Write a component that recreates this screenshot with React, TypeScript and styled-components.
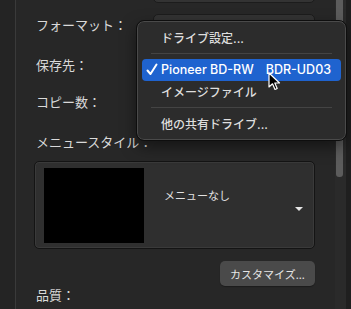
import React from 'react';
import styled, { createGlobalStyle } from 'styled-components';

const GlobalStyle = createGlobalStyle`
  html, body {
    margin: 0;
    padding: 0;
    background: #262626;
  }
  body {
    font-family: "Inter", "Noto Sans CJK JP", sans-serif;
  }
`

const Window = styled.div`
  position: relative;
  width: 351px;
  height: 309px;
  overflow: hidden;
  display: flex;
  background: #272727;
`

const SideStrip = styled.div`
  width: 15px;
  background: #242424;
  border-right: 1px solid #3a3a3a;
`

const Content = styled.div`
  flex: 1;
  display: flex;
  flex-direction: column;
  padding-left: 20px;
  padding-right: 20px;
`

const Row = styled.div<{ top: number }>`
  display: flex;
  align-items: center;
  justify-content: space-between;
  height: 22px;
  margin-top: ${p => p.top}px;
`

const Label = styled.div`
  font-family: "Noto Sans CJK JP", sans-serif;
  font-size: 13px;
  color: #d9d9d9;
  white-space: nowrap;
`

const Popup = styled.div<{ cut?: boolean }>`
  width: 162px;
  height: ${p => (p.cut ? 24 : 20)}px;
  margin-top: ${p => (p.cut ? -21 : 0)}px;
  box-sizing: border-box;
  border-radius: 5px;
  background: #333333;
  border: 1px solid #1c1c1c;
`

const TopStub = styled.div`
  display: flex;
  justify-content: flex-end;
  height: 3px;
  overflow: visible;
`

const StyleBox = styled.div`
  margin-top: 9px;
  height: 88px;
  box-sizing: border-box;
  margin-left: -2px;
  border: 1px solid #141414;
  box-shadow: inset 0 0 0 1px #3a3a3a;
  border-radius: 5px;
  background: #2f2f2f;
  display: flex;
  padding: 6px 9px;
  gap: 20px;
`

const Preview = styled.div`
  width: 100px;
  height: 75px;
  background: #000;
`

const StyleSelect = styled.div`
  flex: 1;
  position: relative;
  font-family: "Noto Sans CJK JP", sans-serif;
  font-size: 11px;
  color: #e2e2e2;
  padding-top: 19px;
`

const Caret = styled.div`
  position: absolute;
  right: 2px;
  top: 39px;
  width: 0;
  height: 0;
  border-left: 4px solid transparent;
  border-right: 4px solid transparent;
  border-top: 4px solid #e6e6e6;
`

const ButtonRow = styled.div`
  display: flex;
  justify-content: flex-end;
  margin-top: 12px;
`

const Button = styled.div`
  width: 95px;
  height: 25px;
  border-radius: 5px;
  background: #4a4a4a;
  color: #e6e6e6;
  font-family: "Noto Sans CJK JP", sans-serif;
  font-size: 11px;
  display: flex;
  align-items: center;
  justify-content: center;
  box-shadow: 0 1px 1px rgba(0,0,0,0.3);
`

const ScrollTrack = styled.div`
  width: 16px;
  display: flex;
  background: #1f1f1f;
`

const ScrollLane = styled.div`
  width: 11px;
  background: #2a2a2a;
  padding-left: 1px;
  box-sizing: border-box;
`

const Thumb = styled.div`
  width: 7px;
  height: 177px;
  background: #5c5c5c;
  border-radius: 0 0 3px 3px;
`

const Menu = styled.div`
  position: absolute;
  left: 137px;
  top: 21px;
  width: 209px;
  height: 119px;
  box-sizing: border-box;
  background: #2c2c2c;
  border: 1px solid #4a4a4a;
  outline: 1px solid #0e0e0e;
  border-radius: 7px;
  box-shadow: 0 6px 16px rgba(0,0,0,0.5);
  padding: 5px 4px;
  display: flex;
  flex-direction: column;
`

const Item = styled.div<{ selected?: boolean; jp?: boolean }>`
  height: 22px;
  display: flex;
  align-items: center;
  padding-left: 19px;
  border-radius: 4px;
  position: relative;
  font-family: "Inter", "Noto Sans CJK JP", sans-serif;
  font-size: ${p => (p.jp ? 12 : 12.5)}px;
  font-weight: 500;
  color: ${p => (p.selected ? '#ffffff' : '#dedede')};
  background: ${p => (p.selected ? '#1f63cf' : 'transparent')};
  white-space: pre;
`

const Gap = styled.span`
  display: inline-block;
  width: 12px;
`

const Separator = styled.div`
  height: 1px;
  background: #444;
  margin: 5px 9px;
`

const Check = styled.span`
  position: absolute;
  left: 4px;
  top: 4px;
  display: flex;
`

const Cursor = styled.svg`
  position: absolute;
  left: 268px;
  top: 72px;
`

export default function App() {
  return (
    <>
      <GlobalStyle />
      <Window>
        <SideStrip />
        <Content>
          <TopStub><Popup cut /></TopStub>
          <Row top={10}><Label>フォーマット：</Label><Popup /></Row>
          <Row top={18}><Label>保存先：</Label><Popup /></Row>
          <Row top={15}><Label>コピー数：</Label></Row>
          <Row top={18}><Label>メニュースタイル：</Label></Row>
          <StyleBox>
            <Preview />
            <StyleSelect>
              メニューなし
              <Caret />
            </StyleSelect>
          </StyleBox>
          <ButtonRow><Button>カスタマイズ...</Button></ButtonRow>
          <Row top={-3}><Label>品質：</Label></Row>
        </Content>
        <ScrollTrack>
          <ScrollLane><Thumb /></ScrollLane>
        </ScrollTrack>

        <Menu>
          <Item jp>ドライブ設定...</Item>
          <Separator />
          <Item selected>
            <Check>
              <svg width="12" height="13" viewBox="0 0 12 13">
                <path d="M1.5 7.5 L4.5 11 L10.5 1.5" fill="none" stroke="#fff" strokeWidth="2" strokeLinecap="round" strokeLinejoin="round" />
              </svg>
            </Check>
            Pioneer BD-RW<Gap />BDR-UD03
          </Item>
          <Item jp>イメージファイル</Item>
          <Separator />
          <Item jp>他の共有ドライブ...</Item>
        </Menu>

        <Cursor width="13" height="19" viewBox="0 0 13 19">
          <path d="M1 1 L1 15 L4.5 11.8 L7 17.5 L9.2 16.5 L6.8 11 L11.5 11 Z" fill="#000" stroke="#fff" strokeWidth="1.2" strokeLinejoin="round" />
        </Cursor>
      </Window>
    </>
  );
}
